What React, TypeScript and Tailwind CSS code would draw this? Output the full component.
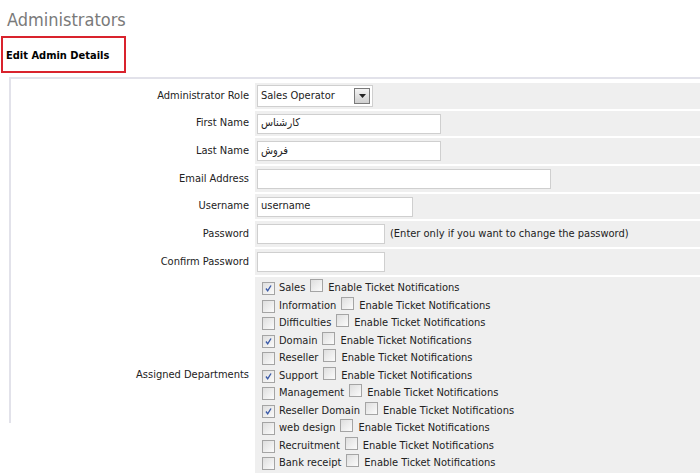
import React from "react";

const font = { fontFamily: '"DejaVu Sans Condensed", "DejaVu Sans", Tahoma, sans-serif' };

const Check: React.FC<{ on?: boolean }> = ({ on }) => (
  <span className="inline-flex h-[13px] w-[13px] shrink-0 items-center justify-center border border-[#a4a4a4] bg-[linear-gradient(135deg,#dedede,#fbfbfb)]">
    {on && (
      <svg width="9" height="9" viewBox="0 0 9 9">
        <path d="M2 4.5 L3.7 6.8 L7 1.5" fill="none" stroke="#3a5aa8" strokeWidth="1.4" />
      </svg>
    )}
  </span>
);

const departments: [string, boolean][] = [
  ["Sales", true],
  ["Information", false],
  ["Difficulties", false],
  ["Domain", true],
  ["Reseller", false],
  ["Support", true],
  ["Management", false],
  ["Reseller Domain", true],
  ["web design", false],
  ["Recruitment", false],
  ["Bank receipt", false],
];

const Row: React.FC<{ label: string; children?: React.ReactNode }> = ({ label, children }) => (
  <>
    <div className="flex h-[25.7px] items-center justify-end bg-white pr-[4px] text-[#222]">{label}</div>
    <div className="flex h-[25.7px] items-center bg-[#efefef] pl-[2px]">{children}</div>
  </>
);

const Input: React.FC<{ w: string; value?: string; rtl?: boolean }> = ({ w, value, rtl }) => (
  <div className={`${w} flex h-[20px] items-center border border-[#cfcfcf] bg-white pl-[3px] text-[#222]`}>
    <span dir={rtl ? "rtl" : undefined}>{value}</span>
  </div>
);

export default function App() {
  return (
    <div className="h-[475px] w-[700px] overflow-hidden bg-white text-[11px]" style={font}>
      <h1 className="pl-[7px] pt-[9px] text-[18px] leading-[22px] text-[#7a7a7a]">Administrators</h1>
      <div className="ml-[1px] mt-[5px] flex h-[37px] w-[125px] items-center border-2 border-[#d9232d] pl-[3px] pt-[3px] text-[11px] font-bold text-black">
        Edit Admin Details
      </div>
      <div className="mt-[4px] flex pl-[9px]">
        <div className="h-[346px] w-[2px] shrink-0 bg-[#e2e2ea]" />
        <div className="flex-1 border-t-2 border-[#e2e2ea] pt-[4px]">
          <div className="grid grid-cols-[242px_1fr] gap-x-[2px] gap-y-[2px]">
            <Row label="Administrator Role">
              <div className="flex h-[22px] w-[116px] items-center justify-between border border-[#cfcfcf] bg-white pl-[3px] pr-[2px] text-[#222]">
                <span>Sales Operator</span>
                <span className="flex h-[16px] w-[16px] items-center justify-center border border-[#7a7a7a] bg-[linear-gradient(#f4f4f4,#cfcfcf)]">
                  <svg width="7" height="4" viewBox="0 0 7 4">
                    <path d="M0 0 H7 L3.5 4 Z" fill="#222" />
                  </svg>
                </span>
              </div>
            </Row>
            <Row label="First Name">
              <Input w="w-[184px]" value="کارشناس" rtl />
            </Row>
            <Row label="Last Name">
              <Input w="w-[184px]" value="فروش" rtl />
            </Row>
            <Row label="Email Address">
              <Input w="w-[294px]" />
            </Row>
            <Row label="Username">
              <Input w="w-[156px]" value="username" />
            </Row>
            <Row label="Password">
              <Input w="w-[128px]" />
              <span className="ml-[5px] text-[#222]">(Enter only if you want to change the password)</span>
            </Row>
            <Row label="Confirm Password">
              <Input w="w-[128px]" />
            </Row>
            <div className="flex items-center justify-end bg-white pr-[4px] text-[#222]">Assigned Departments</div>
            <div className="flex flex-col bg-[#efefef] pb-[1px] pl-[7px] pt-[3px] text-[#222]">
              {departments.map(([name, on]) => (
                <div key={name} className="flex h-[17.5px] items-center">
                  <Check on={on} />
                  <span className="ml-[4px]">{name}</span>
                  <span className="ml-[5px]">
                    <Check />
                  </span>
                  <span className="ml-[5px]">Enable Ticket Notifications</span>
                </div>
              ))}
            </div>
          </div>
        </div>
      </div>
    </div>
  );
}
